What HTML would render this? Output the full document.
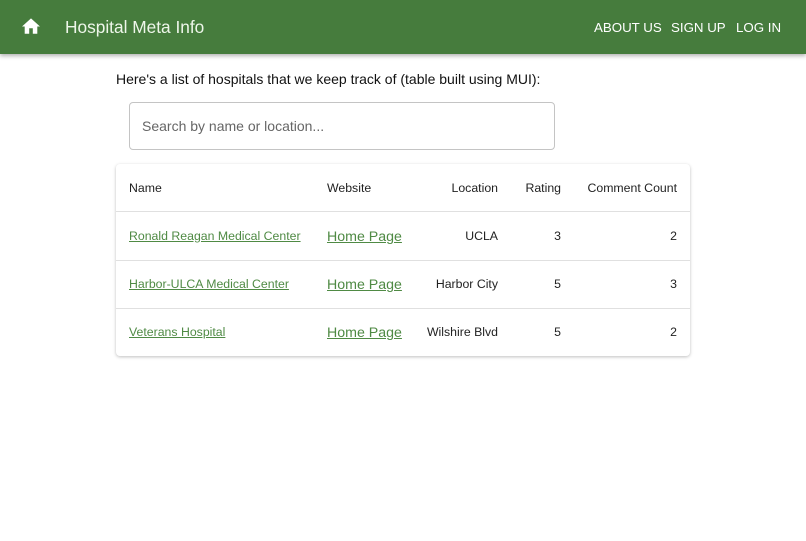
<!DOCTYPE html>
<html><head><style>
body{margin:0;font-family:"Liberation Sans",sans-serif;background:#fff;width:806px;height:541px;overflow:hidden;position:relative}
.nav{position:absolute;left:0;top:0;width:806px;height:54px;background:#467c3d;box-shadow:0 2px 4px rgba(0,0,0,.3);color:#fff}
.nav .t{position:absolute;left:65px;top:17px;font-size:17.3px;color:#eef6ea}
.nav .m{position:absolute;top:20px;font-size:13.3px;letter-spacing:0;white-space:nowrap}
.intro{position:absolute;left:116px;top:71px;font-size:14px;color:#111;white-space:nowrap}
.search{position:absolute;left:129px;top:102px;width:426px;height:48px;border:1px solid #c4c4c4;border-radius:4px;box-sizing:border-box}
.search span{position:absolute;left:12px;top:15px;font-size:14px;color:#666}
.tbl{position:absolute;left:116px;top:164px;width:574px;height:192px;border-radius:4px;box-shadow:0 1px 3px rgba(0,0,0,.25);background:#fff;font-size:12.3px;color:#222}
.row{position:absolute;left:0;width:574px;height:48px;border-bottom:1px solid #e0e0e0}
.c{position:absolute;top:17px;white-space:nowrap}
a{color:#4f8a44;text-decoration:underline}
.hp{font-size:14.2px;top:17px}
</style></head><body>
<div class="nav">
<svg style="position:absolute;left:22px;top:18px" width="18" height="17" viewBox="0 0 20 18"><path d="M8 17V11h4v6h5V9h3L10 0 0 9h3v8z" fill="#fff"/></svg>
<div class="t">Hospital Meta Info</div>
<div class="m" style="left:594px">ABOUT US</div>
<div class="m" style="left:671px">SIGN UP</div>
<div class="m" style="left:736px">LOG IN</div>
</div>
<div class="intro">Here's a list of hospitals that we keep track of (table built using MUI):</div>
<div class="search"><span>Search by name or location...</span></div>
<div class="tbl">
<div class="row" style="top:0;height:47px"><span class="c" style="left:13px">Name</span><span class="c" style="left:211px">Website</span><span class="c" style="right:192px">Location</span><span class="c" style="right:129px">Rating</span><span class="c" style="right:13px">Comment Count</span></div>
<div class="row" style="top:48px"><a class="c" style="left:13px">Ronald Reagan Medical Center</a><a class="c hp" style="left:211px">Home Page</a><span class="c" style="right:192px">UCLA</span><span class="c" style="right:129px">3</span><span class="c" style="right:13px">2</span></div>
<div class="row" style="top:96px"><a class="c" style="left:13px">Harbor-ULCA Medical Center</a><a class="c hp" style="left:211px">Home Page</a><span class="c" style="right:192px">Harbor City</span><span class="c" style="right:129px">5</span><span class="c" style="right:13px">3</span></div>
<div class="row" style="top:144px;border-bottom:none"><a class="c" style="left:13px">Veterans Hospital</a><a class="c hp" style="left:211px">Home Page</a><span class="c" style="right:192px">Wilshire Blvd</span><span class="c" style="right:129px">5</span><span class="c" style="right:13px">2</span></div>
</div>
</body></html>
